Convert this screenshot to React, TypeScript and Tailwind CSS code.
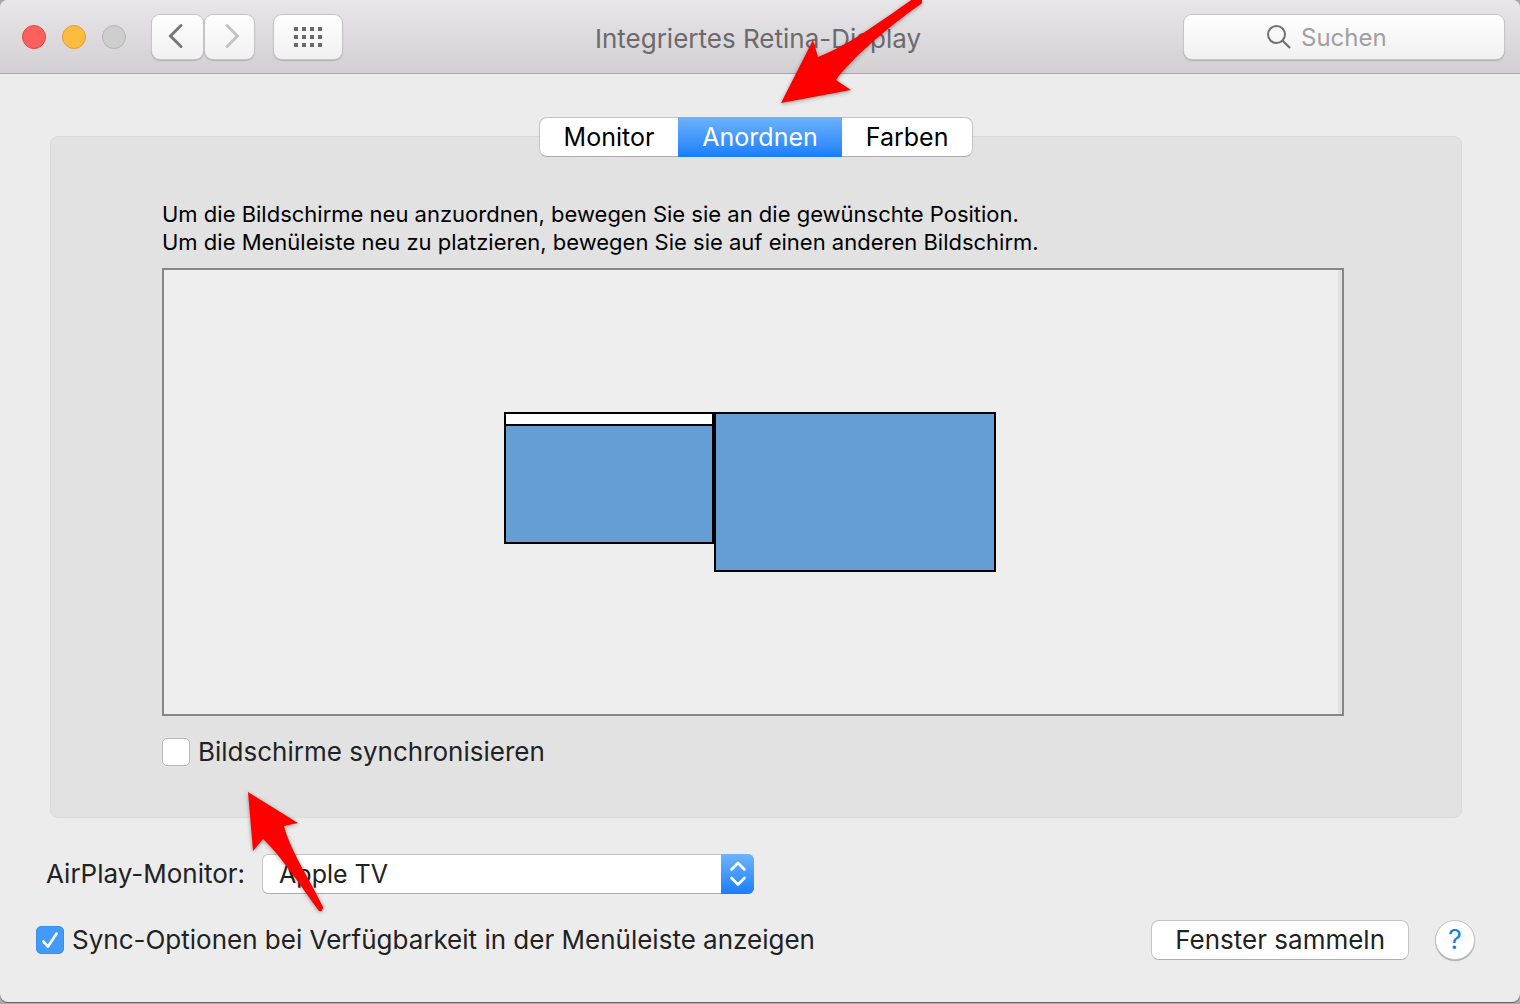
import React, { useState } from "react";

const tabs = ["Monitor", "Anordnen", "Farben"];

function CheckBox({
  id,
  label,
  defaultChecked = false,
}: {
  id: string;
  label: string;
  defaultChecked?: boolean;
}) {
  return (
    <div className="flex items-center gap-2">
      <span className="relative flex size-7 shrink-0">
        <input
          id={id}
          type="checkbox"
          defaultChecked={defaultChecked}
          className="peer size-7 appearance-none rounded-[5px] border border-[#b9b9b9] bg-white checked:border-[#3b8ee8] checked:bg-[#429bf9]"
        />
        <svg
          viewBox="0 0 28 28"
          fill="none"
          aria-hidden="true"
          className="pointer-events-none absolute inset-0 hidden size-7 peer-checked:block"
        >
          <path d="M7.3 15.4 L12 20.6 L20.6 7.6" stroke="#fff" strokeWidth="2.7" strokeLinecap="round" strokeLinejoin="round" />
        </svg>
      </span>
      <label htmlFor={id} className="text-[26px] leading-8 text-[#222]">
        {label}
      </label>
    </div>
  );
}

function TitleBar() {
  const tool =
    "flex h-11 items-center justify-center rounded-lg bg-linear-to-b from-[#fefefe] to-[#f1f1f1] shadow-[0_0_0_1px_#c6c4c6,0_1px_1px_1px_#b4b2b4]";
  return (
    <header className="grid h-[74px] grid-cols-[1fr_auto_1fr] items-center rounded-t-lg border-b border-[#a9a7aa] bg-linear-to-b from-[#e8e6e9] to-[#d2d0d3] pr-4 pl-3">
      <div className="flex items-center pl-2.5">
        <div className="flex gap-4">
          <button aria-label="Schließen" className="size-6 rounded-full border border-[#df4744] bg-[#fc605c]" />
          <button aria-label="Minimieren" className="size-6 rounded-full border border-[#dea034] bg-[#fdbc40]" />
          <button aria-label="Zoomen" disabled className="size-6 rounded-full border border-[#b3b2b4] bg-[#cfcecf]" />
        </div>
        <div className="ml-[26px] flex gap-0.5">
          <button aria-label="Zurück" className={`${tool} w-[51px]`}>
            <svg width="16" height="26" viewBox="0 0 16 26" fill="none" aria-hidden="true" className="-mt-0.5 mr-1">
              <path d="M13 2.5 L2.5 13 L13 23.5" stroke="#777" strokeWidth="3" strokeLinecap="round" />
            </svg>
          </button>
          <button aria-label="Vorwärts" disabled className={`${tool} w-[49px]`}>
            <svg width="16" height="26" viewBox="0 0 16 26" fill="none" aria-hidden="true" className="-mt-0.5 ml-1">
              <path d="M3 2.5 L13.5 13 L3 23.5" stroke="#c3c3c3" strokeWidth="3" strokeLinecap="round" />
            </svg>
          </button>
        </div>
        <button aria-label="Alle einblenden" className={`${tool} ml-5 w-17`}>
          <span className="grid grid-cols-4 gap-1">
            {Array.from({ length: 12 }, (_, i) => (
              <span key={i} className="size-1 bg-[#696969]" />
            ))}
          </span>
        </button>
      </div>
      <h1 className="pt-1 text-[26px] leading-8 text-[#6b6a6c]">Integriertes Retina-Display</h1>
      <label className="flex h-11 w-80 items-center justify-center gap-2.5 justify-self-end rounded-lg bg-linear-to-b from-[#fefefe] to-[#f1f1f1] shadow-[0_0_0_1px_#c6c4c6,0_1px_1px_1px_#b4b2b4]">
        <svg width="24" height="24" viewBox="0 0 24 24" fill="none" stroke="#707070" strokeWidth="2" aria-hidden="true">
          <circle cx="9.5" cy="9.5" r="8.5" />
          <path d="M15.7 15.7 L23 23" strokeWidth="2.3" />
        </svg>
        <input
          type="search"
          aria-label="Suchen"
          placeholder="Suchen"
          className="w-30 bg-transparent pt-0.5 text-[24px] leading-8 outline-none placeholder:text-[#a0a0a0] placeholder:opacity-100"
        />
      </label>
    </header>
  );
}

function TabBar() {
  const [active, setActive] = useState("Anordnen");
  return (
    <div role="tablist" className="relative z-10 -mb-[21px] flex h-10 self-center rounded-lg border border-[#c4c4c4] border-b-[#adadad] bg-white">
      {tabs.map((tab) => (
        <button
          key={tab}
          role="tab"
          aria-selected={tab === active}
          onClick={() => setActive(tab)}
          className={
            tab === active
              ? "-my-px bg-linear-to-b from-[#6cb3fa] to-[#167efc] px-6 text-[25px] leading-8 text-white"
              : "px-6 text-[25px] leading-8 text-black"
          }
        >
          {tab}
        </button>
      ))}
      <svg
        width="144"
        height="112"
        viewBox="778 -4 144 112"
        aria-hidden="true"
        className="pointer-events-none absolute bottom-12 left-[238px] drop-shadow-[0_1px_2px_rgba(0,0,0,0.35)]"
      >
        <path d="M781 103 L813 40 L818 57 C850 45 885 18 917 -4 L924 2 C890 25 850 60 836 80 L851 90 Z" fill="#fe0000" />
      </svg>
    </div>
  );
}

function Arrangement() {
  return (
    <div className="mt-3 flex h-112 border-2 border-[#868686] bg-[#eee]">
      <div className="flex flex-1 items-center justify-center pr-0.5">
        <div className="flex items-start">
          <div className="flex h-33 w-[210px] flex-col border-2 border-black bg-[#659dd5]">
            <div className="h-3 border-b-2 border-black bg-white" />
          </div>
          <div className="h-40 w-[282px] border-2 border-black bg-[#659dd5]" />
        </div>
      </div>
      <div className="w-1 bg-[#e1e1e1]" />
    </div>
  );
}

export default function App() {
  return (
    <div className="min-h-screen bg-[#aaa] font-['Inter',sans-serif]">
      <div className="flex min-h-[calc(100vh-2px)] flex-col rounded-lg bg-[#ececec] shadow-[0_1px_0_#666]">
        <TitleBar />
        <main className="flex flex-col pt-[43px] pr-[58px] pl-[50px]">
          <TabBar />
          <section className="rounded-lg border border-[#dadada] bg-[#e2e2e2] pt-[63px] pr-[117px] pb-[49px] pl-[111px]">
            <p className="text-[22px] leading-7 text-black">
              Um die Bildschirme neu anzuordnen, bewegen Sie sie an die gewünschte Position.
              <br />
              Um die Menüleiste neu zu platzieren, bewegen Sie sie auf einen anderen Bildschirm.
            </p>
            <Arrangement />
            <div className="relative z-10 mt-5">
              <CheckBox id="mirror" label="Bildschirme synchronisieren" />
              <svg
                width="82"
                height="126"
                viewBox="245 789 82 126"
                aria-hidden="true"
                className="pointer-events-none absolute top-[53px] left-[83px] drop-shadow-[0_1px_2px_rgba(0,0,0,0.35)]"
              >
                <path d="M248 792 L298 823 L284 826 C290 850 310 880 323 907 Q323 912 319 911 C302 888 282 857 263 839 L253 851 Z" fill="#fe0000" />
              </svg>
            </div>
          </section>
        </main>
        <footer className="flex flex-col pt-9 pr-[45px] pb-9 pl-9">
          <div className="flex items-center gap-[17px] pl-2.5">
            <label htmlFor="airplay" className="text-[26px] leading-8 text-[#222]">
              AirPlay-Monitor:
            </label>
            <div className="relative h-10 w-[492px]">
              <select
                id="airplay"
                className="size-full appearance-none rounded-md border border-[#c4c4c4] border-b-[#adadad] bg-white px-4 text-[25px] leading-8 text-[#222]"
              >
                <option>Apple TV</option>
              </select>
              <span className="pointer-events-none absolute inset-y-0 right-0 flex w-[33px] items-center justify-center rounded-r-md bg-linear-to-b from-[#6cb3fa] to-[#167efc]">
                <svg width="18" height="26" viewBox="0 0 18 26" fill="none" stroke="#fff" strokeWidth="2.6" strokeLinecap="round" strokeLinejoin="round" aria-hidden="true">
                  <path d="M2.5 8.5 L9 2 L15.5 8.5 M2.5 17 L9 23.5 L15.5 17" />
                </svg>
              </span>
            </div>
          </div>
          <div className="mt-[26px] flex items-center justify-between">
            <CheckBox id="menubar" label="Sync-Optionen bei Verfügbarkeit in der Menüleiste anzeigen" defaultChecked />
            <div className="flex items-center gap-[26px]">
              <button className="h-10 rounded-lg border border-[#c4c4c4] border-b-[#adadad] bg-white px-[23px] text-[26px] leading-8 text-[#222]">
                Fenster sammeln
              </button>
              <button
                aria-label="Hilfe"
                className="size-10 rounded-full border border-[#c4c4c4] bg-white text-[27px] leading-8 text-[#1c7fe0] shadow-[0_1px_1px_#aaa]"
              >
                ?
              </button>
            </div>
          </div>
        </footer>
      </div>
    </div>
  );
}
